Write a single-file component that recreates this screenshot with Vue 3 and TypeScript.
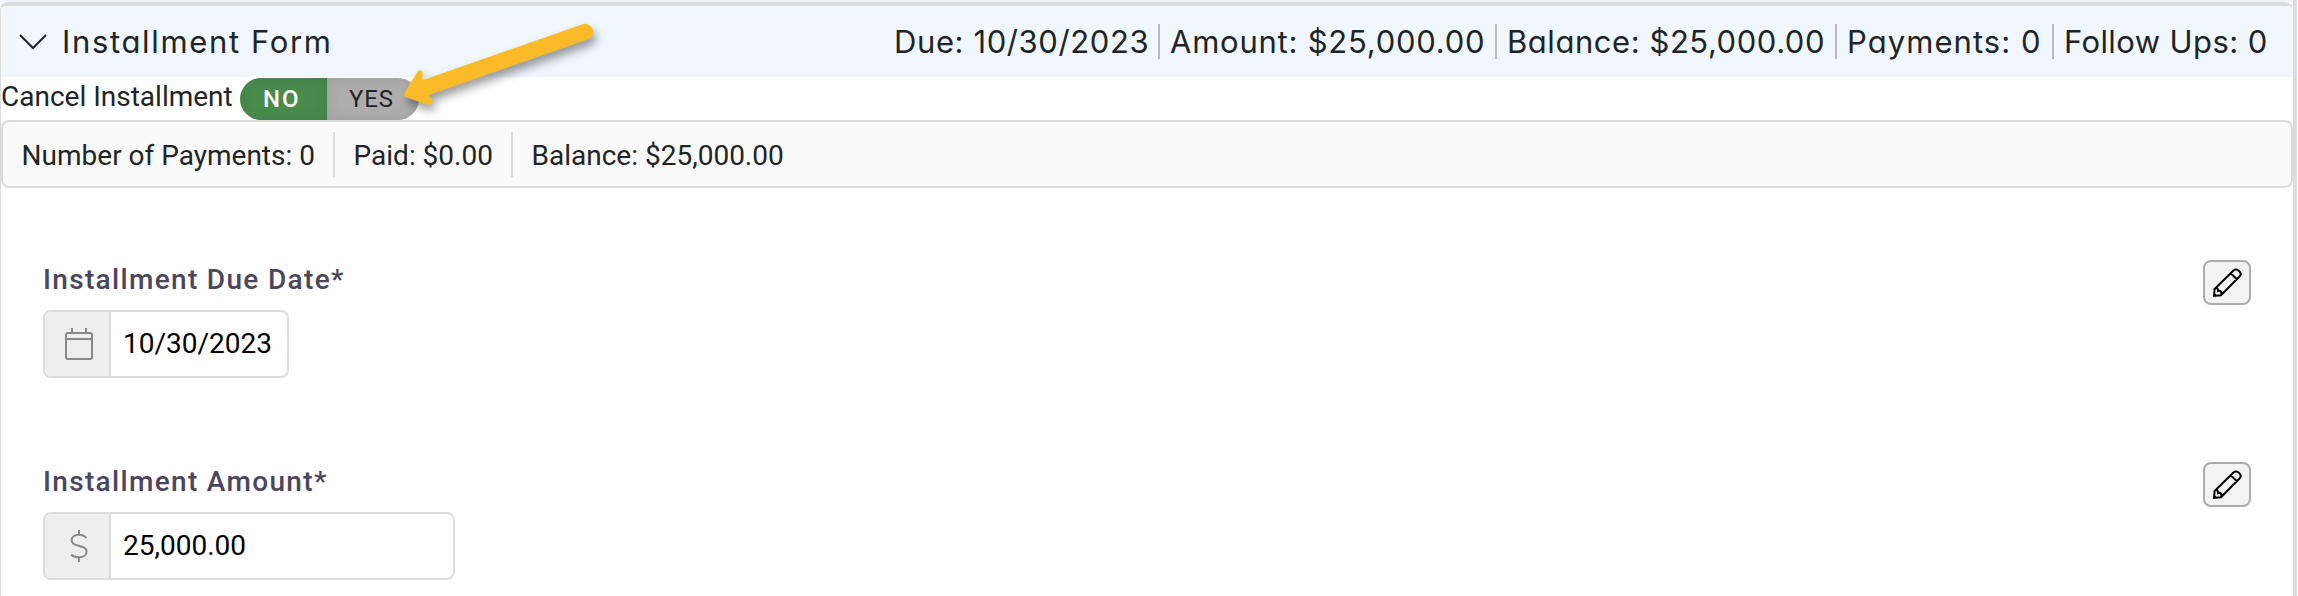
<script setup lang="ts">
interface Stat {
  text: string
  key: string
}

const headerStats: Stat[] = [
  { key: 'due', text: 'Due: 10/30/2023' },
  { key: 'amount', text: 'Amount: $25,000.00' },
  { key: 'balance', text: 'Balance: $25,000.00' },
  { key: 'payments', text: 'Payments: 0' },
  { key: 'follow', text: 'Follow Ups: 0' },
]

const summary: string[] = ['Number of Payments: 0', 'Paid: $0.00', 'Balance: $25,000.00']

interface Field {
  id: 'date' | 'amount'
  label: string
  value: string
}

const fields: Field[] = [
  { id: 'date', label: 'Installment Due Date*', value: '10/30/2023' },
  { id: 'amount', label: 'Installment Amount*', value: '25,000.00' },
]
</script>

<template>
  <div class="page">
    <div class="previous"></div>
    <main class="panel">
      <header class="header">
        <svg class="chevron" width="30" height="18" viewBox="0 0 30 18"><path d="M2 2 15 15 28 2" /></svg>
        <h1 class="title"><span>Installment Form</span></h1>
        <div class="stats">
          <div v-for="s in headerStats" :key="s.key" class="stat" :class="s.key"><span>{{ s.text }}</span></div>
        </div>
      </header>

      <div class="cancel">
        <span class="cancel-label">Cancel Installment</span>
        <div class="toggle">
          <span class="no">NO</span>
          <span class="yes">YES</span>
        </div>
      </div>

      <div class="summary">
        <div v-for="item in summary" :key="item" class="summary-item">{{ item }}</div>
      </div>

      <section class="fields">
        <div v-for="f in fields" :key="f.id" class="field">
          <div>
            <label class="label" :class="f.id">{{ f.label }}</label>
            <div class="input" :class="f.id">
              <span class="addon">
                <svg v-if="f.id === 'date'" width="28" height="32" viewBox="0 0 28 32">
                  <rect x="1" y="5" width="26" height="26" rx="2" />
                  <path d="M1 11H27M7 0V5M21 0V5" />
                </svg>
                <svg v-else width="18" height="32" viewBox="0 0 18 32">
                  <path d="M9 0V5M9 27V32M16.2 8C14.8 5.8 12.4 4.8 9 4.8C4.500 4.800 1.600 6.900 1.600 10.200C1.600 13.700 4.500 14.700 8.500 15.700C13 16.800 16.600 17.800 16.600 21.700C16.600 25.100 13.500 27.300 9 27.300C5.500 27.300 2.700 26.300 1.200 24.500" />
                </svg>
              </span>
              <span class="value">{{ f.value }}</span>
            </div>
          </div>
          <button class="edit" type="button" aria-label="Edit">
            <svg width="30" height="30" viewBox="0 0 30 30">
              <path d="M2 28 2.600 21 21.500 2.500C23 1 25.200 1 26.800 2.700L27.500 3.400C29 5 29 7 27.500 8.500L9 27.300ZM18.800 5.300 24.800 11.300M2.600 21C4.500 19.700 6.300 20.200 6 23.100C8.500 22.300 10 23.500 9 27.300" />
              <path class="tip" d="M2 24.500 5.500 28H2Z" />
            </svg>
          </button>
        </div>
      </section>
    </main>

    <svg class="arrow" width="220" height="120" viewBox="0 0 220 120">
      <path d="M202.500 24.300A8 8 0 0 1 207.600 39.500L48.300 95.200 51.800 99.300C54 102 51.500 105.800 47.500 104.700L25.500 97C23.800 96.300 23.500 94.500 24.500 93L37.300 72C39.200 69.300 42.500 70 42.700 73.500L42.500 80.200Z" />
    </svg>
  </div>
</template>

<style>
body {
  background: #fff;
}
</style>

<style scoped>
.page {
  position: relative;
  box-sizing: border-box;
  width: 2297px;
  height: 596px;
  overflow: hidden;
  border-right: 4px solid #dcdcdc;
  font-family: Roboto, "Liberation Sans", sans-serif;
  font-size: 28px;
  color: #212426;
}
.previous {
  height: 2px;
  background: #f0f4fe;
}
.panel {
  box-sizing: border-box;
  height: 620px;
  border-top: 4px solid #dcdcdc;
  border-left: 1px solid #dcdcdc;
  border-radius: 8px 8px 0 0;
}
.header {
  display: flex;
  align-items: center;
  height: 71px;
  padding-left: 17px;
  background: #f0f7ff;
  border-radius: 5px 5px 0 0;
  font-family: Inter, "Open Sans", sans-serif;
  font-size: 31px;
  font-feature-settings: "cv11";
  white-space: nowrap;
}
.chevron {
  fill: none;
  stroke: #212426;
  stroke-width: 2;
}
.title {
  margin: 0 0 0 14px;
  font-size: inherit;
  font-weight: 400;
  letter-spacing: 1.65px;
}
.stats {
  display: flex;
  align-items: center;
  margin-left: auto;
  padding-right: 14px;
}
.stat {
  box-sizing: border-box;
  height: 35px;
  line-height: 35px;
  padding-left: 10px;
  border-left: 2px solid #bbb;
}
.stat.due { width: 264px; border-left: 0; padding-left: 0; letter-spacing: 0.6px; }
.stat.amount { width: 337px; letter-spacing: 0.76px; }
.stat.balance { width: 340px; letter-spacing: 0.55px; }
.stat.payments { width: 217px; letter-spacing: 1.05px; }
.stat.follow { width: 227px; letter-spacing: 0.4px; }
.cancel {
  display: flex;
  height: 43px;
}
.cancel-label {
  width: 239px;
  line-height: 39px;
}
.toggle {
  display: flex;
  width: 179px;
  height: 42px;
  margin-top: 1px;
  border-radius: 21px;
  overflow: hidden;
  font-size: 24px;
  line-height: 42px;
  letter-spacing: 2px;
}
.toggle span {
  box-sizing: border-box;
  box-shadow: inset 0 0 14px rgba(0, 0, 0, 0.1);
}
.no {
  width: 87px;
  padding-left: 23px;
  background: #488b4c;
  color: #fff;
  font-weight: 500;
}
.yes {
  flex: 1;
  padding-left: 22px;
  background: #adadad;
  letter-spacing: 0.8px;
}
.summary {
  display: flex;
  align-items: center;
  box-sizing: border-box;
  height: 68px;
  border: 2px solid #dcdcdc;
  border-radius: 8px;
  background: #fafafa;
}
.summary-item {
  height: 45px;
  line-height: 47px;
  padding: 0 18px 0 18.6px;
  border-right: 2px solid #dcdcdc;
}
.summary-item:last-child {
  border-right: 0;
}
.fields {
  padding: 72px 42px 0;
}
.field {
  display: flex;
  justify-content: space-between;
  height: 202px;
}
.label {
  display: block;
  height: 50px;
  line-height: 40px;
  font-weight: 500;
  letter-spacing: 1.33px;
  color: #4b465c;
}
.input {
  display: flex;
  box-sizing: border-box;
  height: 68px;
  border: 2px solid #dcdcdc;
  border-radius: 8px;
  overflow: hidden;
}
.input.date { width: 246px; }
.input.amount { width: 412px; }
.addon {
  display: flex;
  align-items: center;
  justify-content: center;
  box-sizing: border-box;
  width: 66px;
  padding-left: 4px;
  border-right: 2px solid #dcdcdc;
  background: #eee;
}
.addon svg {
  fill: none;
  stroke: #888;
  stroke-width: 2;
}
.value {
  padding-left: 12px;
  line-height: 64px;
  color: #000;
}
.edit {
  display: flex;
  align-items: center;
  justify-content: center;
  width: 48px;
  height: 45px;
  padding: 0;
  border: 2px solid #acacac;
  border-radius: 8px;
  background: #f3f3f3;
}
.edit svg {
  fill: none;
  stroke: #000;
  stroke-width: 2;
}
.edit .tip {
  fill: #000;
  stroke: none;
}
.arrow {
  position: absolute;
  left: 380px;
  top: 0;
  fill: #fbba28;
  filter: drop-shadow(3px 6px 5px rgba(0, 0, 0, 0.38));
}
</style>
